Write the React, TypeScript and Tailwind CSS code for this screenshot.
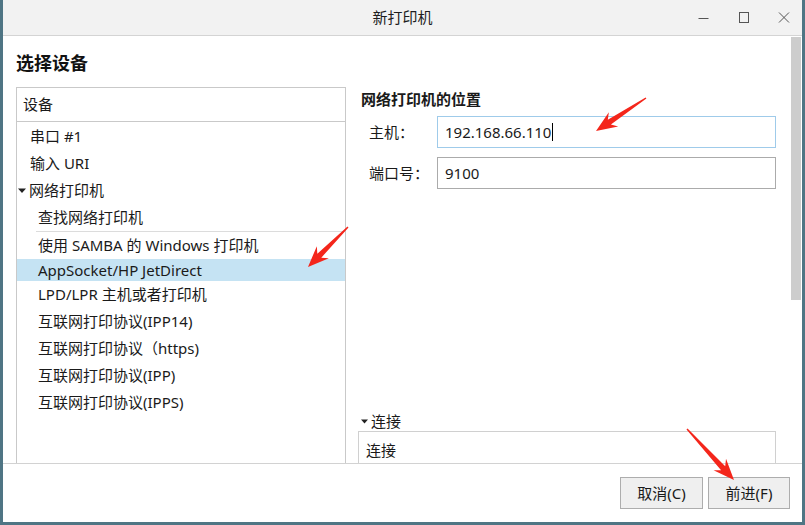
import React from 'react'

const FONT = '"Noto Sans", "Noto Sans CJK SC", sans-serif'

const TOP_ITEMS = ['串口 #1', '输入 URI']

const NET_ITEMS = [
  'LPD/LPR 主机或者打印机',
  '互联网打印协议(IPP14)',
  '互联网打印协议（https)',
  '互联网打印协议(IPP)',
  '互联网打印协议(IPPS)',
]

// red annotation arrows: tail -> tip
const ARROWS = [
  { x1: 348, y1: 227, x2: 308, y2: 267 },
  { x1: 646, y1: 98, x2: 596, y2: 131 },
  { x1: 687, y1: 429, x2: 734, y2: 480 },
]

function arrowPoints(x1: number, y1: number, x2: number, y2: number) {
  const dx = x2 - x1
  const dy = y2 - y1
  const len = Math.hypot(dx, dy)
  const ux = dx / len
  const uy = dy / len
  const nx = -uy
  const ny = ux
  const p = (d: number, w: number) => `${x1 + ux * d + nx * w},${y1 + uy * d + ny * w}`
  const h = 21
  return [p(0, 0.7), p(len - h + 5, 2.8), p(len - h, 8.5), p(len, 0), p(len - h, -8.5), p(len - h + 5, -2.8), p(0, -0.7)].join(' ')
}

function TitleBar() {
  return (
    <div className="relative flex h-[36px] items-center justify-center border-b border-[#d4d4d4] bg-[#f2f2f2]">
      <span className="text-[15px] text-[#1e1e1e]">新打印机</span>
      <div className="absolute right-[12px] top-0 flex h-full items-center gap-[29px]">
        <svg width="11" height="11" viewBox="0 0 11 11">
          <line x1="0.5" y1="6.5" x2="10.5" y2="6.5" stroke="#555" strokeWidth="1" />
        </svg>
        <svg width="11" height="11" viewBox="0 0 11 11">
          <rect x="1.5" y="0.5" width="9" height="10" fill="none" stroke="#555" strokeWidth="1" />
        </svg>
        <svg width="12" height="11" viewBox="0 0 12 11">
          <path d="M1 0.5 L11 10.5 M11 0.5 L1 10.5" stroke="#555" strokeWidth="1" />
        </svg>
      </div>
    </div>
  )
}

function DeviceTree() {
  return (
    <div className="h-[420px] w-[330px] shrink-0 border border-[#c9c9c9] text-[15px] text-[#1a1a1a]">
      <div className="flex h-[34px] items-center border-b border-[#c9c9c9] pl-[6px]">设备</div>
      <div className="pt-[1px]">
        {TOP_ITEMS.map((t) => (
          <div key={t} className="flex h-[27px] items-center pl-[13px]">{t}</div>
        ))}
        <div className="flex h-[27px] items-center pl-[1px]">
          <svg width="8" height="6" viewBox="0 0 8 6" className="mr-[3px]">
            <path d="M0 0.5 H8 L4 5 Z" fill="#222" />
          </svg>
          网络打印机
        </div>
        <div className="flex h-[27px] items-center pl-[21px]">查找网络打印机</div>
        <div className="ml-[19px] h-px bg-[#dcdcdc]" />
        <div className="flex h-[27px] items-center pl-[21px]">使用 SAMBA 的 Windows 打印机</div>
        <div className="flex h-[22px] items-center bg-[#c5e3f3] pl-[21px]">AppSocket/HP JetDirect</div>
        {NET_ITEMS.map((t) => (
          <div key={t} className="flex h-[27px] items-center pl-[21px]">{t}</div>
        ))}
      </div>
    </div>
  )
}

function LocationForm() {
  return (
    <div className="w-[418px] shrink-0 text-[15px] text-[#1a1a1a]">
      <div className="pl-[3px] pt-[2px] text-[15px] font-bold leading-[20px]">网络打印机的位置</div>
      <div className="mt-[7px] flex items-center">
        <span className="w-[79px] pl-[11px]">主机：</span>
        <div className="flex h-[32px] flex-1 items-center border border-[#9fcbea] bg-white px-[7px]">
          192.168.66.110
          <span className="ml-px inline-block h-[18px] w-px bg-black" />
        </div>
      </div>
      <div className="mt-[9px] flex items-center">
        <span className="w-[79px] pl-[11px]">端口号：</span>
        <div className="flex h-[32px] flex-1 items-center border border-[#ababab] bg-white px-[7px]">9100</div>
      </div>
      <div className="mt-[222px] flex h-[20px] items-center pl-[3px]">
        <svg width="7" height="5" viewBox="0 0 7 5" className="mr-[3px]">
          <path d="M0 0.5 H7 L3.5 4.5 Z" fill="#222" />
        </svg>
        连接
      </div>
      <div className="h-[60px] border border-[#d0d0d0] bg-white">
        <div className="flex h-[36px] items-center pl-[7px]">连接</div>
      </div>
    </div>
  )
}

export default function App() {
  return (
    <div className="relative h-[525px] w-[805px] overflow-hidden bg-[#4f7584]" style={{ fontFamily: FONT }}>
      <div className="ml-[3px] flex h-[522px] w-[799px] flex-col bg-white">
        <TitleBar />

        <div className="flex h-[428px] overflow-hidden border-b border-[#d2d2d2]">
          <div className="flex-1 overflow-hidden pl-[13px] pt-[15px]">
            <h1 className="text-[18px] font-bold leading-[24px] text-[#111]">选择设备</h1>
            <div className="mt-[12px] flex gap-[12px]">
              <DeviceTree />
              <LocationForm />
            </div>
          </div>
          <div className="w-[12px] shrink-0 pl-px pt-px">
            <div className="h-[263px] w-[10px] bg-[#cdcdcd]" />
          </div>
        </div>

        <div className="flex flex-1 justify-end gap-[5px] pr-[12px] pt-[13px]">
          <button className="flex h-[32px] w-[83px] items-center justify-center border border-[#adadad] bg-[#efefef] text-[15px] text-[#1a1a1a]">
            取消(C)
          </button>
          <button className="flex h-[32px] w-[82px] items-center justify-center border border-[#adadad] bg-[#efefef] text-[15px] text-[#1a1a1a]">
            前进(F)
          </button>
        </div>
      </div>

      <svg className="pointer-events-none absolute inset-0" width="805" height="525">
        {ARROWS.map((a, i) => (
          <polygon key={i} points={arrowPoints(a.x1, a.y1, a.x2, a.y2)} fill="#f4261b" />
        ))}
      </svg>
    </div>
  )
}
